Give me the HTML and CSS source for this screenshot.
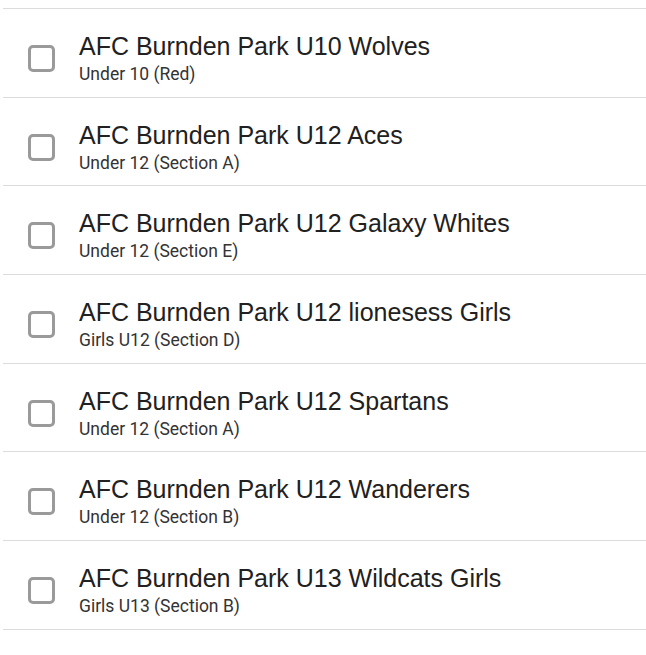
FILE: index.html
```html
<!DOCTYPE html>
<html>
<head>
<meta charset="utf-8">
<link rel="stylesheet" href="styles.css">
</head>
<body>
<ul class="list">
  <li class="row"><span class="box"></span><div class="text"><div class="title">AFC Burnden Park U10 Wolves</div><div class="sub">Under 10 (Red)</div></div></li>
  <li class="row"><span class="box"></span><div class="text"><div class="title">AFC Burnden Park U12 Aces</div><div class="sub">Under 12 (Section A)</div></div></li>
  <li class="row"><span class="box"></span><div class="text"><div class="title">AFC Burnden Park U12 Galaxy Whites</div><div class="sub">Under 12 (Section E)</div></div></li>
  <li class="row"><span class="box"></span><div class="text"><div class="title">AFC Burnden Park U12 lionesess Girls</div><div class="sub">Girls U12 (Section D)</div></div></li>
  <li class="row"><span class="box"></span><div class="text"><div class="title">AFC Burnden Park U12 Spartans</div><div class="sub">Under 12 (Section A)</div></div></li>
  <li class="row"><span class="box"></span><div class="text"><div class="title">AFC Burnden Park U12 Wanderers</div><div class="sub">Under 12 (Section B)</div></div></li>
  <li class="row"><span class="box"></span><div class="text"><div class="title">AFC Burnden Park U13 Wildcats Girls</div><div class="sub">Girls U13 (Section B)</div></div></li>
</ul>
</body>
</html>
```
FILE: styles.css
```css
html, body {
  margin: 0;
  padding: 0;
  background: #fff;
}
body {
  padding: 8px 0 0 3px;
}
.list {
  list-style: none;
  margin: 0;
  padding: 0;
  border-top: 1px solid #dcdcdc;
}
.row {
  box-sizing: border-box;
  display: flex;
  align-items: flex-start;
  height: 88.67px;
  border-bottom: 1px solid #dcdcdc;
  padding: 21px 0 0 25px;
}
.box {
  box-sizing: border-box;
  width: 27px;
  height: 27px;
  border: 3px solid #9a9a9a;
  border-radius: 5px;
  margin-top: 15px;
  flex: none;
}
.text {
  margin-left: 24px;
}
.title {
  font-family: "Liberation Sans", Arial, sans-serif;
  font-size: 25px;
  line-height: 32px;
  color: #212121;
}
.sub {
  font-family: Roboto, sans-serif;
  font-size: 17.5px;
  line-height: 24px;
  color: #333;
}
```
